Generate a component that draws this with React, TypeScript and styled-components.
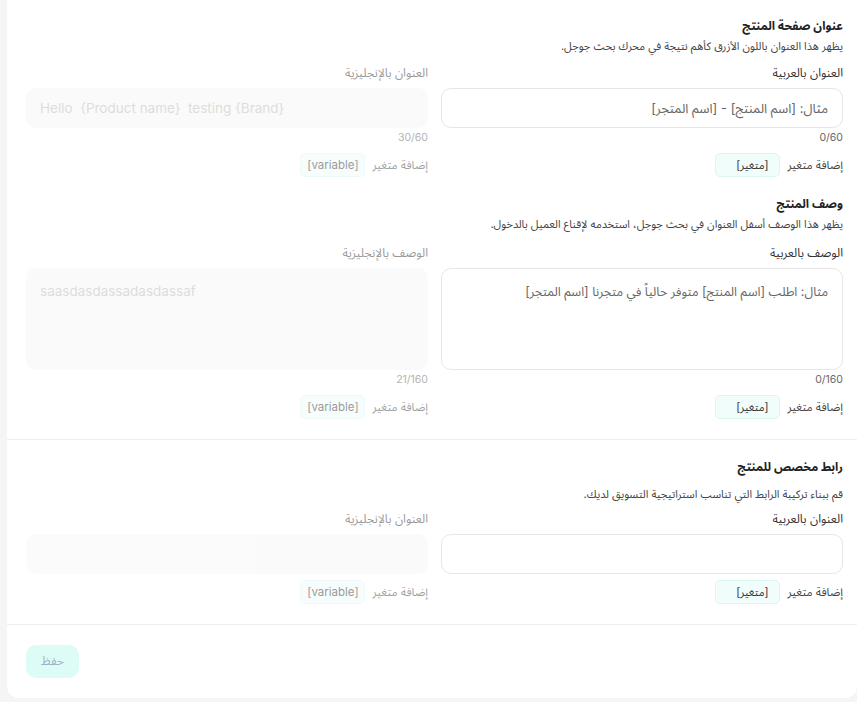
import React from 'react';
import styled, { createGlobalStyle } from 'styled-components';

const GlobalStyle = createGlobalStyle`
  html, body {
    margin: 0;
    padding: 0;
    background: #f5f5f5;
  }
  body {
    font-family: "Inter", "Noto Sans Arabic", "DejaVu Sans", sans-serif;
    color: #333;
  }
  * {
    box-sizing: border-box;
  }
`;

const Card = styled.div`
  direction: rtl;
  width: 850px;
  margin-left: 7px;
  background: #fff;
  border-radius: 0 0 12px 12px;
  padding-bottom: 20px;
`;

type BlockProps = {
  divided?: boolean;
  top: number;
};

const Block = styled.div<BlockProps>`
  padding: ${({ top }) => top}px 14px 20px 19px;
  border-top: ${({ divided }) => (divided ? '1px solid #efefef' : 'none')};
`;

type SectionProps = {
  gap?: number;
};

const Section = styled.section<SectionProps>`
  margin-top: ${({ gap }) => gap || 0}px;
`;

const Title = styled.h3`
  margin: 0;
  font-size: 12px;
  line-height: 20px;
  font-weight: 700;
  color: #222;
`;

type SubtitleProps = {
  spaced?: boolean;
};

const Subtitle = styled.p<SubtitleProps>`
  margin: ${({ spaced }) => (spaced ? '8px' : '1px')} 0 0;
  font-size: 11px;
  line-height: 18px;
  color: #444;
`;

const Fields = styled.div<SectionProps>`
  display: grid;
  grid-template-columns: 1fr 1fr;
  column-gap: 13px;
  margin-top: ${({ gap }) => gap || 9}px;
`;

type MutedProps = {
  muted?: boolean;
};

const Field = styled.div<MutedProps>`
  display: flex;
  flex-direction: column;
  opacity: ${({ muted }) => (muted ? 0.5 : 1)};
`;

const Label = styled.label`
  font-size: 12px;
  line-height: 18px;
  color: #333;
  margin-bottom: 6px;
`;

const boxStyle = `
  width: 100%;
  border-radius: 10px;
  font-family: "Inter", "Noto Sans Arabic", "DejaVu Sans", sans-serif;
  font-size: 12.5px;
  color: #777;
  outline: none;
  &::placeholder {
    color: #666;
  }
`;

const TextInput = styled.input<MutedProps>`
  ${boxStyle}
  height: 40px;
  padding: 0 14px;
  font-size: ${({ muted }) => (muted ? '13.5px' : '13px')};
  border: ${({ muted }) => (muted ? 'none' : '1px solid #e6e6e6')};
  background: ${({ muted }) => (muted ? '#f7f7f7' : '#fff')};
  &:disabled {
    color: #bbb;
  }
`;

const TextArea = styled.textarea<MutedProps>`
  ${boxStyle}
  height: 102px;
  padding: 14px 14px;
  line-height: 18px;
  resize: none;
  font-size: ${({ muted }) => (muted ? '13.5px' : '12.5px')};
  border: ${({ muted }) => (muted ? 'none' : '1px solid #e6e6e6')};
  background: ${({ muted }) => (muted ? '#f7f7f7' : '#fff')};
  &:disabled {
    color: #bbb;
  }
`;

const Counter = styled.div`
  margin-top: 2px;
  font-size: 10.5px;
  line-height: 16px;
  color: #666;
`;

type VarRowProps = {
  gap: number;
};

const VarRow = styled.div<VarRowProps>`
  display: flex;
  align-items: center;
  gap: 7px;
  margin-top: ${({ gap }) => gap}px;
`;

const VarLabel = styled.span`
  font-size: 11.5px;
  color: #444;
`;

const Chip = styled.button`
  width: 65px;
  height: 24px;
  padding: 0 11px 0 4px;
  text-align: start;
  border-radius: 5px;
  border: 1px solid #dcf7f1;
  background: #f0fdfb;
  font-family: "Inter", "Noto Sans Arabic", "DejaVu Sans", sans-serif;
  font-size: 11px;
  color: #333;
  cursor: pointer;

  &[dir='ltr'] {
    padding: 0 5px;
    text-align: center;
    font-size: 11.5px;
  }
`;

const Footer = styled.div`
  display: flex;
  justify-content: flex-end;
  padding: 20px 14px 0 19px;
  border-top: 1px solid #efefef;
`;

const SaveButton = styled.button`
  width: 53px;
  height: 33px;
  border: none;
  border-radius: 10px;
  background: #dcfcf5;
  color: #9fb0c8;
  font-family: "Inter", "Noto Sans Arabic", "DejaVu Sans", sans-serif;
  font-size: 12px;
`;

interface SeoFieldProps {
  label: string;
  placeholder?: string;
  value?: string;
  counter?: string;
  chip: string;
  multiline?: boolean;
  english?: boolean;
}

const SeoField = ({ label, placeholder, value, counter, chip, multiline, english }: SeoFieldProps) => {
  const common = {
    muted: english,
    disabled: english,
    placeholder,
    defaultValue: value,
    dir: english ? 'ltr' : 'rtl',
  };
  return (
    <Field muted={english}>
      <Label>{label}</Label>
      {multiline ? <TextArea {...common} /> : <TextInput {...common} />}
      {counter && <Counter>{counter}</Counter>}
      <VarRow gap={counter ? 7 : 6}>
        <VarLabel>إضافة متغير</VarLabel>
        <Chip dir={english ? 'ltr' : 'rtl'}>{chip}</Chip>
      </VarRow>
    </Field>
  );
};

const App = () => {
  return (
    <>
      <GlobalStyle />
      <Card>
        <Block top={16}>
          <Section>
            <Title>عنوان صفحة المنتج</Title>
            <Subtitle>يظهر هذا العنوان باللون الأزرق كأهم نتيجة في محرك بحث جوجل.</Subtitle>
            <Fields>
              <SeoField
                label="العنوان بالعربية"
                placeholder="مثال: [اسم المنتج] - [اسم المتجر]"
                counter="0/60"
                chip="[متغير]"
              />
              <SeoField
                english
                label="العنوان بالإنجليزية"
                value="Hello  {Product name}  testing {Brand}"
                counter="30/60"
                chip="[variable]"
              />
            </Fields>
          </Section>

          <Section gap={17}>
            <Title>وصف المنتج</Title>
            <Subtitle>يظهر هذا الوصف أسفل العنوان في بحث جوجل، استخدمه لإقناع العميل بالدخول.</Subtitle>
            <Fields gap={11}>
              <SeoField
                multiline
                label="الوصف بالعربية"
                placeholder="مثال: اطلب [اسم المنتج] متوفر حالياً في متجرنا [اسم المتجر]"
                counter="0/160"
                chip="[متغير]"
              />
              <SeoField
                english
                multiline
                label="الوصف بالإنجليزية"
                value="saasdasdassadasdassaf"
                counter="21/160"
                chip="[variable]"
              />
            </Fields>
          </Section>
        </Block>

        <Block divided top={17}>
          <Section>
            <Title>رابط مخصص للمنتج</Title>
            <Subtitle spaced>قم ببناء تركيبة الرابط التي تناسب استراتيجية التسويق لديك.</Subtitle>
            <Fields gap={7}>
              <SeoField label="العنوان بالعربية" chip="[متغير]" />
              <SeoField english label="العنوان بالإنجليزية" value="" chip="[variable]" />
            </Fields>
          </Section>
        </Block>

        <Footer>
          <SaveButton>حفظ</SaveButton>
        </Footer>
      </Card>
    </>
  );
};

export default App;
